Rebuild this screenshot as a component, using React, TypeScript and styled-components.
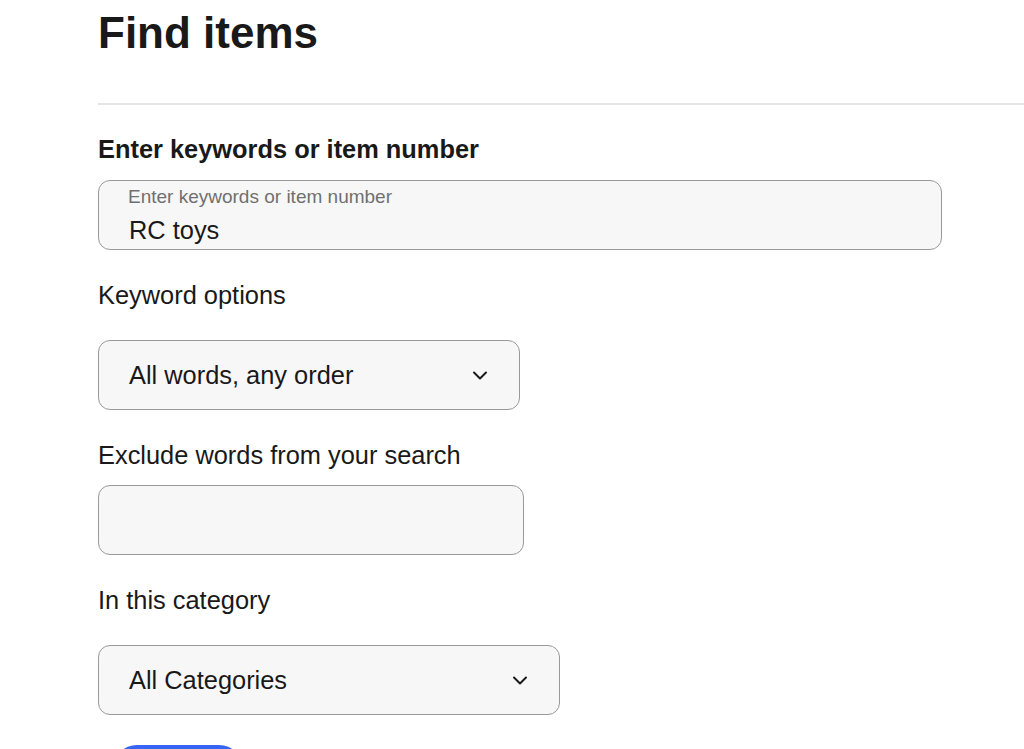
import styled, { createGlobalStyle } from "styled-components";

const colors = {
  text: "#191919",
  muted: "#707070",
  border: "#999999",
  field: "#f7f7f7",
  divider: "#e5e5e5",
  blue: "#3665f3",
};

const GlobalStyle = createGlobalStyle`
  html, body {
    margin: 0;
    padding: 0;
    background: #ffffff;
    overflow: hidden;
  }
  body {
    font-family: "Liberation Sans", Arial, Helvetica, sans-serif;
    color: ${colors.text};
  }
`;

const Page = styled.div`
  padding-left: 98px;
  width: 926px;
`;

const Title = styled.h1`
  margin: 0;
  padding-top: 8px;
  font-size: 44px;
  line-height: 50px;
  font-weight: 700;
`;

const Divider = styled.hr`
  margin: 45px 0 0;
  border: none;
  border-top: 2px solid ${colors.divider};
`;

const Form = styled.form`
  display: flex;
  flex-direction: column;
  padding-top: 29px;
`;

const Group = styled.div`
  display: flex;
  flex-direction: column;
  margin-bottom: 30px;
`;

const Label = styled.label<{ $bold?: boolean; $gap: number }>`
  font-size: 25.4px;
  line-height: 30px;
  font-weight: ${(p) => (p.$bold ? 700 : 400)};
  margin-bottom: ${(p) => p.$gap}px;
`;

const Field = styled.div<{ $width: number }>`
  box-sizing: border-box;
  width: ${(p) => p.$width}px;
  height: 70px;
  border: 1.5px solid ${colors.border};
  border-radius: 12px;
  background: ${colors.field};
  display: flex;
  align-items: center;
  justify-content: space-between;
  padding: 0 30px 0 30px;
`;

const FloatingField = styled(Field)`
  flex-direction: column;
  align-items: flex-start;
  justify-content: center;
  gap: 8px;
`;

const FloatLabel = styled.span`
  font-size: 19px;
  line-height: 22px;
  color: ${colors.muted};
  margin-top: 0;
  margin-left: -1px;
`;

const Value = styled.span`
  font-size: 25.4px;
  line-height: 28px;
  color: ${colors.text};
`;

const Chevron = styled.svg`
  width: 18px;
  height: 18px;
  flex-shrink: 0;
`;

const ButtonRow = styled.div`
  padding-left: 15px;
`;

const SearchButton = styled.button`
  width: 130px;
  height: 48px;
  padding: 0;
  border: none;
  border-radius: 24px;
  background: ${colors.blue};
  color: #fff;
  font-family: inherit;
  font-size: 18px;
  line-height: 22px;
  font-weight: 700;
`;

const ChevronIcon = () => (
  <Chevron viewBox="0 0 18 18" fill="none">
    <path d="M3 6.5l6 6 6-6" stroke="#191919" strokeWidth="2" strokeLinecap="round" strokeLinejoin="round" />
  </Chevron>
);

export default function App() {
  return (
    <>
      <GlobalStyle />
      <Page>
        <Title>Find items</Title>
        <Divider />
        <Form>
          <Group>
            <Label $bold $gap={16}>Enter keywords or item number</Label>
            <FloatingField $width={844}>
              <FloatLabel>Enter keywords or item number</FloatLabel>
              <Value>RC toys</Value>
            </FloatingField>
          </Group>
          <Group>
            <Label $gap={30}>Keyword options</Label>
            <Field $width={422}>
              <Value>All words, any order</Value>
              <ChevronIcon />
            </Field>
          </Group>
          <Group>
            <Label $gap={15}>Exclude words from your search</Label>
            <Field $width={426} />
          </Group>
          <Group>
            <Label $gap={30}>In this category</Label>
            <Field $width={462}>
              <Value>All Categories</Value>
              <ChevronIcon />
            </Field>
          </Group>
          <ButtonRow>
            <SearchButton type="button">Search</SearchButton>
          </ButtonRow>
        </Form>
      </Page>
    </>
  );
}
